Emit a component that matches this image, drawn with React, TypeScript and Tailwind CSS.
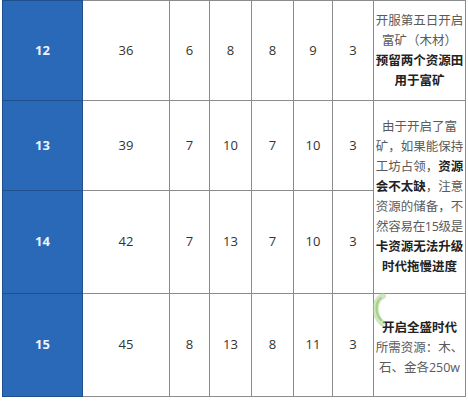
const rows = [
  { lv: '12', vals: ['36', '6', '8', '8', '9', '3'], h: 'h-[100px]' },
  { lv: '13', vals: ['39', '7', '10', '7', '10', '3'], h: 'h-[90px]' },
  { lv: '14', vals: ['42', '7', '13', '7', '10', '3'], h: 'h-[103px]' },
  { lv: '15', vals: ['45', '8', '13', '8', '11', '3'], h: 'h-[103px]' },
];

const B = ({ children }: { children: React.ReactNode }) => (
  <b className="font-bold text-[#222]">{children}</b>
);

function Note({ index }: { index: number }) {
  const base =
    'border border-[#8c8c8c] px-0 text-center align-middle whitespace-nowrap text-[12.5px] leading-[20px] text-[#5a5a5a]';
  if (index === 0)
    return (
      <td className={base}>
        <div>开服第五日开启</div>
        <div>富矿（木材）</div>
        <div><B>预留两个资源田</B></div>
        <div><B>用于富矿</B></div>
      </td>
    );
  if (index === 1)
    return (
      <td rowSpan={2} className={base}>
        <div>由于开启了富</div>
        <div>矿，如果能保持</div>
        <div>工坊占领，<B>资源</B></div>
        <div><B>会不太缺</B>，注意</div>
        <div>资源的储备，不</div>
        <div className="tracking-[-0.3px]">然容易在15级是</div>
        <div><B>卡资源无法升级</B></div>
        <div><B>时代拖慢进度</B></div>
      </td>
    );
  if (index === 3)
    return (
      <td className={`${base} relative`}>
        {/* faint green smudge over the cell, as in the scan */}
        <svg className="absolute left-[-6px] top-[-1px]" width="34" height="34" viewBox="0 0 34 34">
          <path d="M15 3 C6 7 5 22 14 30" fill="none" stroke="#a6d487" strokeWidth="6" strokeLinecap="round" opacity="0.55" />
          <path d="M13 5 C7 9 7 21 13 27" fill="none" stroke="#7db85a" strokeWidth="2" strokeLinecap="round" opacity="0.5" />
        </svg>
        <div className="pt-[6px]"><B>开启全盛时代</B></div>
        <div>所需资源：木、</div>
        <div>石、金各250w</div>
      </td>
    );
  return null;
}

export default function App() {
  return (
    <div
      className="h-[406px] w-[468px] bg-white pl-[2px]"
      style={{ fontFamily: '"Open Sans", "Noto Sans CJK SC", sans-serif' }}
    >
      <table className="w-[463px] table-fixed border-collapse">
        <colgroup>
          <col className="w-[80px]" />
          <col className="w-[87px]" />
          <col className="w-[40px]" />
          <col className="w-[42px]" />
          <col className="w-[42px]" />
          <col className="w-[39px]" />
          <col className="w-[41px]" />
          <col className="w-[92px]" />
        </colgroup>
        <tbody>
          {rows.map((r, i) => (
            <tr key={r.lv} className={r.h}>
              <td className="border border-[#1f4f8c] bg-[#2a68b8] text-center align-middle text-[13px] font-bold text-[#eef4ff]">
                {r.lv}
              </td>
              {r.vals.map((v, j) => (
                <td
                  key={j}
                  className="border border-[#8c8c8c] text-center align-middle text-[13px] text-[#333]"
                >
                  {v}
                </td>
              ))}
              <Note index={i} />
            </tr>
          ))}
        </tbody>
      </table>
    </div>
  );
}
